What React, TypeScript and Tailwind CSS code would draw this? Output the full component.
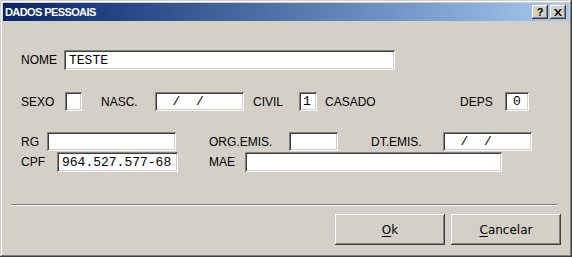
import React from 'react';

const sunken =
  'bg-white shadow-[inset_1px_1px_#808080,inset_-1px_-1px_#ffffff,inset_2px_2px_#404040,inset_-2px_-2px_#d4d0c8]';
const raised =
  'shadow-[inset_-1px_-1px_#404040,inset_1px_1px_#ffffff,inset_-2px_-2px_#808080,inset_2px_2px_#d4d0c8]';
const mono = "font-['Liberation_Mono',monospace] text-[13px] leading-none whitespace-pre";

const TitleButton: React.FC<{ children: React.ReactNode }> = ({ children }) => (
  <div
    className={`w-[16px] h-[14px] bg-[#d4d0c8] ${raised} flex items-center justify-center text-black text-[11px] font-bold leading-none`}
  >
    {children}
  </div>
);

const App: React.FC = () => {
  return (
    <div className="w-[572px] h-[257px] bg-[#d4d0c8] p-[3px] shadow-[inset_-1px_-1px_#404040,inset_1px_1px_#d4d0c8,inset_-2px_-2px_#808080,inset_2px_2px_#ffffff] font-['Liberation_Sans',Arial,sans-serif] text-[12px] text-black flex flex-col">
      {/* title bar */}
      <div className="h-[18px] bg-linear-to-r from-[#0a246a] to-[#a6caf0] flex items-center justify-between pl-[2px] pr-[3px]">
        <span className="text-white font-bold text-[11px] tracking-[-0.6px] leading-none">DADOS PESSOAIS</span>
        <div className="flex gap-[2px]">
          <TitleButton>?</TitleButton>
          <TitleButton>
            <svg width="8" height="7" viewBox="0 0 8 7">
              <path d="M0 0h2l2 2.5L6 0h2L5 3.5 8 7H6L4 4.5 2 7H0l3-3.5z" fill="#000" />
            </svg>
          </TitleButton>
        </div>
      </div>

      {/* form */}
      <div className="flex flex-col pl-[18px]">
        <div className="flex items-center mt-[29px]">
          <span className="w-[43px]">NOME</span>
          <div className={`w-[331px] h-[20px] ${sunken} flex items-center pl-[5px]`}>
            <span className={mono}>TESTE</span>
          </div>
        </div>

        <div className="flex items-center mt-[22px]">
          <span className="w-[44px]">SEXO</span>
          <div className={`w-[17px] h-[19px] ${sunken}`} />
          <span className="ml-[19px] w-[54px]">NASC.</span>
          <div className={`w-[89px] h-[19px] ${sunken} flex items-center pl-[2px]`}>
            <span className={mono}>{'  /  /'}</span>
          </div>
          <span className="ml-[9px] w-[46px]">CIVIL</span>
          <div className={`w-[18px] h-[19px] ${sunken} flex items-center pl-[4px]`}>
            <span className={mono}>1</span>
          </div>
          <span className="ml-[8px] w-[135px]">CASADO</span>
          <span className="w-[45px]">DEPS</span>
          <div className={`w-[24px] h-[19px] ${sunken} flex items-center justify-center`}>
            <span className={mono}>0</span>
          </div>
        </div>

        <div className="flex items-center mt-[21px]">
          <span className="w-[26px]">RG</span>
          <div className={`w-[129px] h-[19px] ${sunken}`} />
          <span className="ml-[33px] w-[80px]">ORG.EMIS.</span>
          <div className={`w-[49px] h-[19px] ${sunken}`} />
          <span className="ml-[33px] w-[72px]">DT.EMIS.</span>
          <div className={`w-[89px] h-[19px] ${sunken} flex items-center pl-[2px]`}>
            <span className={mono}>{'  /  /'}</span>
          </div>
        </div>

        <div className="flex items-center mt-[1px]">
          <span className="w-[36px]">CPF</span>
          <div className={`w-[121px] h-[20px] ${sunken} flex items-center pl-[5px]`}>
            <span className={mono}>964.527.577-68</span>
          </div>
          <span className="ml-[31px] w-[36px]">MAE</span>
          <div className={`w-[257px] h-[20px] ${sunken}`} />
        </div>
      </div>

      {/* separator */}
      <div className="mt-[32px] ml-[8px] w-[547px] h-[2px] border-t border-t-[#808080] border-b border-b-white" />

      {/* buttons */}
      <div className="flex justify-end gap-[6px] mt-[8px] pr-[8px]">
        <button className={`w-[110px] h-[31px] bg-[#d4d0c8] ${raised} font-['DejaVu_Sans',sans-serif] text-[12px]`}>
          <span className="underline underline-offset-2">O</span>k
        </button>
        <button className={`w-[110px] h-[31px] bg-[#d4d0c8] ${raised} font-['DejaVu_Sans',sans-serif] text-[12px]`}>
          <span className="underline underline-offset-2">C</span>ancelar
        </button>
      </div>
    </div>
  );
};

export default App;
